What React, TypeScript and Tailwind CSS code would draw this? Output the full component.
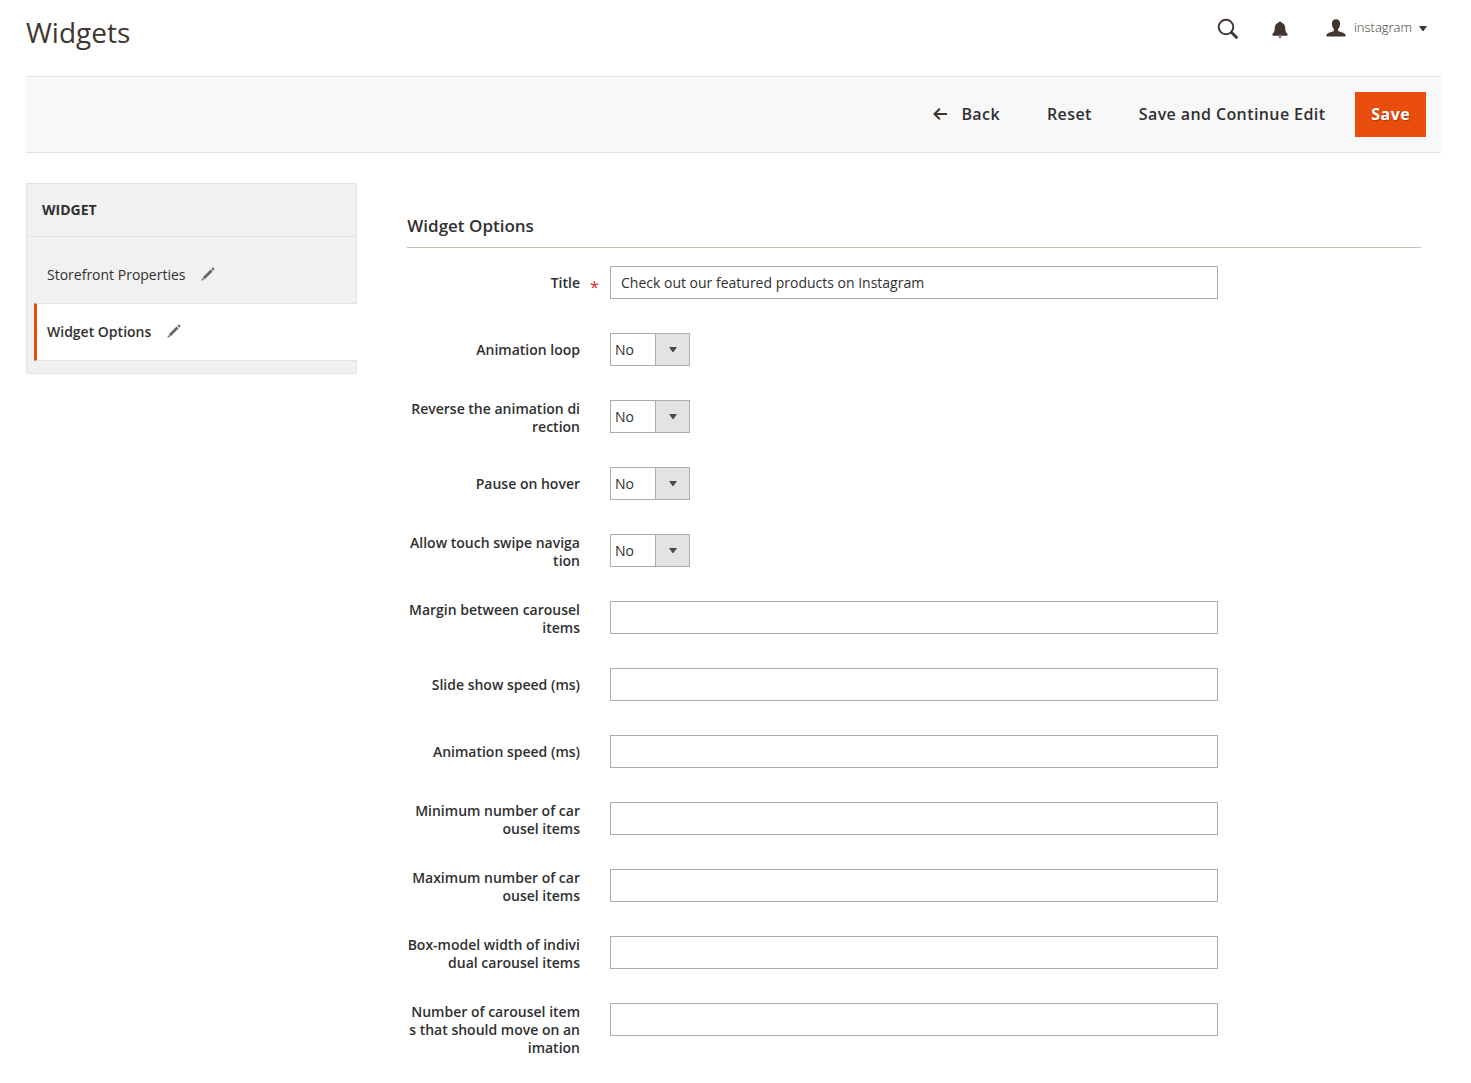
import { useState } from "react";

type Field = {
  id: string;
  label: string;
  type: "text" | "select";
  value?: string;
  required?: boolean;
};

const fields: Field[] = [
  { id: "title", label: "Title", type: "text", value: "Check out our featured products on Instagram", required: true },
  { id: "loop", label: "Animation loop", type: "select" },
  { id: "reverse", label: "Reverse the animation direction", type: "select" },
  { id: "pause", label: "Pause on hover", type: "select" },
  { id: "touch", label: "Allow touch swipe navigation", type: "select" },
  { id: "margin", label: "Margin between carousel items", type: "text" },
  { id: "slideshow-speed", label: "Slide show speed (ms)", type: "text" },
  { id: "animation-speed", label: "Animation speed (ms)", type: "text" },
  { id: "min-items", label: "Minimum number of carousel items", type: "text" },
  { id: "max-items", label: "Maximum number of carousel items", type: "text" },
  { id: "item-width", label: "Box-model width of individual carousel items", type: "text" },
  { id: "move", label: "Number of carousel items that should move on animation", type: "text" },
];

function SearchIcon() {
  return (
    <svg width="22" height="22" viewBox="0 0 22 22" fill="none" stroke="currentColor" aria-hidden="true">
      <circle cx="9" cy="9" r="7.3" strokeWidth="2" />
      <path d="M14.3 14.3L20.300 20.300" strokeWidth="3" />
    </svg>
  );
}

function BellIcon() {
  return (
    <svg width="16" height="18" viewBox="0 0 16 18" fill="currentColor" aria-hidden="true">
      <path d="M8 .5c.9 0 1.500.6 1.600 1.300 2.300.7 3.500 2.600 3.600 5 .1 3.300.6 4.500 2.300 6v1.900H.5v-1.900C2.200 11.300 2.700 10.100 2.800 6.800c.1-2.400 1.300-4.300 3.600-5C6.500 1.100 7.100.5 8 .5z" />
      <path d="M6.400 15.600h3.200c-.2.900-.8 1.400-1.600 1.400s-1.400-.5-1.600-1.400z" />
    </svg>
  );
}

function UserIcon() {
  return (
    <svg width="20" height="18" viewBox="0 0 20 18" fill="currentColor" aria-hidden="true">
      <path d="M10 .2c2.700 0 4.100 1.700 4.100 4.200 0 2.200-.7 4.300-2 5.500v1.500c.3.900 1.600 1.300 3.500 1.900 2.300.7 3.900 1.300 3.900 3v1.200H.5v-1.200c0-1.700 1.600-2.300 3.900-3 1.900-.6 3.200-1 3.500-1.900V9.900c-1.300-1.200-2-3.300-2-5.500C5.900 1.900 7.300.2 10 .2z" />
    </svg>
  );
}

function CaretIcon() {
  return (
    <svg width="8" height="5" viewBox="0 0 8 5" fill="currentColor" aria-hidden="true">
      <path d="M0 0h8L4.500 5h-1z" />
    </svg>
  );
}

function PencilIcon() {
  return (
    <svg width="14" height="14" viewBox="0 0 14 14" fill="#666" aria-hidden="true">
      <path d="M.3 13.700l.9-2.700 1.800 1.800z" />
      <path d="M1.800 10.200l7.800-7.800 2 2-7.800 7.800z" />
      <path d="M10.300 1.700l.9-.9c.4-.4.800-.4 1.200 0l.8.8c.4.4.4.800 0 1.200l-.9.900z" />
    </svg>
  );
}

function BackArrow() {
  return (
    <svg width="15" height="12" viewBox="0 0 15 12" fill="none" stroke="#41362f" strokeWidth="2" aria-hidden="true">
      <path d="M1.500 6H14M6.800.8L1.500 6l5.300 5.200" />
    </svg>
  );
}

function FieldRow({ field }: { field: Field }) {
  const [value, setValue] = useState(field.value ?? "");

  return (
    <div className="flex min-h-[67px] items-start">
      <div className="flex min-h-[33px] w-1/5 items-center justify-end pr-[30px]">
        <label htmlFor={field.id} className="relative text-right text-sm leading-[18px] font-semibold break-all">
          {field.label}
          {field.required ? (
            <span className="absolute top-1 left-full pl-[10px] text-base leading-[18px] font-normal text-[#e22626]">*</span>
          ) : null}
        </label>
      </div>
      {field.type === "select" ? (
        <div className="relative">
          <select
            id={field.id}
            className="block h-[33px] w-20 appearance-none border border-[#adadad] bg-white pl-1 text-sm text-[#303030]"
          >
            <option>No</option>
            <option>Yes</option>
          </select>
          <span className="pointer-events-none absolute inset-y-0 right-0 flex w-[35px] items-center justify-center border border-[#adadad] bg-[#e3e3e3] text-[#514943]">
            <CaretIcon />
          </span>
        </div>
      ) : (
        <input
          id={field.id}
          type="text"
          value={value}
          required={field.required}
          onChange={(e) => setValue(e.target.value)}
          className="h-[33px] w-3/5 border border-[#adadad] bg-white px-[10px] text-sm text-[#303030]"
        />
      )}
    </div>
  );
}

export default function App() {
  return (
    <div className="min-h-screen bg-white pr-[30px] pl-[26px] font-['Open_Sans',sans-serif] text-[#303030]">
      <header className="flex h-[76px] items-start justify-between pr-[14px] text-[#41362f]">
        <h1 className="pt-3 text-[28px] leading-10">Widgets</h1>
        <div className="flex h-14 items-center">
          <button type="button" aria-label="Search" className="mr-[33px] pt-[2px]">
            <SearchIcon />
          </button>
          <button type="button" aria-label="Notifications" className="mr-[38px] pt-[3px]">
            <BellIcon />
          </button>
          <button type="button" className="flex items-center text-[13px] font-light">
            <UserIcon />
            <span className="mr-[7px] ml-2">instagram</span>
            <CaretIcon />
          </button>
        </div>
      </header>

      <div className="flex items-center justify-end border-y border-[#e3e3e3] bg-[#f8f8f8] px-[15px] py-[15px] text-base font-semibold tracking-wide">
        <button type="button" className="mr-[47px] flex items-center gap-[13px] pb-[2px]">
          <BackArrow />
          Back
        </button>
        <button type="button" className="mr-[47px] pb-[2px]">Reset</button>
        <button type="button" className="mr-[30px] pb-[2px]">Save and Continue Edit</button>
        <button type="button" className="h-[45px] bg-[#e84d0e] px-4 pb-[2px] font-bold text-white text-shadow-[1px_1px_0_rgba(0,0,0,0.25)]">
          Save
        </button>
      </div>

      <div className="grid grid-cols-12 items-start gap-[30px] pt-[30px]">
        <nav className="col-span-3 border border-[#e3e3e3] bg-[#f1f1f1] pb-3 text-sm">
          <h2 className="border-b border-[#e3e3e3] px-[15px] py-4 leading-5 font-bold uppercase">Widget</h2>
          <ul className="pt-[9px]">
            <li>
              <a href="#storefront" className="flex h-[57px] items-center gap-[15px] px-5">
                Storefront Properties
                <span className="pb-[2px]">
                  <PencilIcon />
                </span>
              </a>
            </li>
            <li className="-mr-px ml-[7px]">
              <a
                href="#options"
                aria-current="page"
                className="flex h-[58px] items-center gap-4 border-y border-l-[3px] border-y-[#e3e3e3] border-l-[#e84d0e] bg-white px-[10px] font-semibold"
              >
                Widget Options
                <span className="pb-[2px]">
                  <PencilIcon />
                </span>
              </a>
            </li>
          </ul>
        </nav>

        <main className="col-span-9 px-5 pt-[30px]">
          <h2 className="mb-[18px] border-b border-[#cac3b4] pb-[9px] text-[17px] leading-[25px] font-semibold">Widget Options</h2>
          <form>
            {fields.map((field) => (
              <FieldRow key={field.id} field={field} />
            ))}
          </form>
        </main>
      </div>
    </div>
  );
}
